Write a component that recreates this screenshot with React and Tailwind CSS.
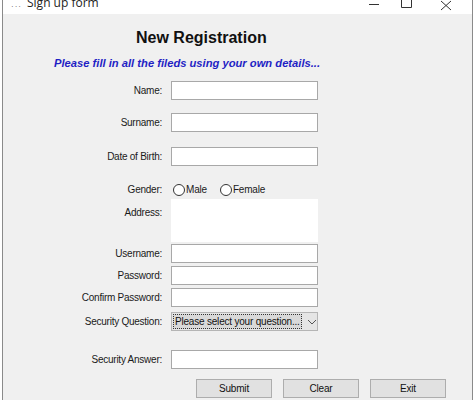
import { useState } from 'react';

const font = { fontFamily: '"Liberation Sans", Arial, sans-serif' };

const Field = ({ label, top, children, alignTop }) => (
  <div className={`flex ${alignTop ? 'items-start' : 'items-center'}`} style={{ marginTop: top }}>
    <div className={`w-[159px] text-right text-[10px] tracking-[-0.25px] text-[#1a1a1a] ${alignTop ? 'pt-[6px]' : ''}`}>{label}</div>
    <div className="ml-[9px]">{children}</div>
  </div>
);

const TextBox = () => (
  <input className="block w-[147px] h-[19px] bg-white border border-[#a8a8a8] outline-none px-1 text-[11px]" />
);

const Radio = ({ label, checked, onClick }) => (
  <button onClick={onClick} className="flex items-center gap-[1px] text-[10px] tracking-[-0.2px] text-[#1a1a1a]">
    <span className="w-[12px] h-[12px] rounded-full border border-[#333] bg-white flex items-center justify-center">
      {checked && <span className="w-[6px] h-[6px] rounded-full bg-[#333]" />}
    </span>
    {label}
  </button>
);

export default function App() {
  const [gender, setGender] = useState(null);

  return (
    <div className="w-[474px] h-[400px] overflow-hidden bg-white pl-[2px] pr-[1px]" style={font}>
      <div className="h-full border-l border-r border-[#8a8a8a] bg-[#f0f0f0] flex flex-col">
        {/* title bar */}
        <div className="h-[14px] bg-white flex items-start relative shrink-0">
          <span className="ml-[8px] mt-[3px] text-[8px] leading-none text-[#555] tracking-[1px]">···</span>
          <span className="ml-[5px] -mt-[3px] text-[12px] leading-none text-[#222]" style={{ fontFamily: '"Open Sans", "Liberation Sans", sans-serif' }}>
            Sign up form
          </span>
          <div className="ml-auto flex items-start">
            <svg width="46" height="14" viewBox="0 0 46 14" className="block">
              <line x1="21" y1="4.5" x2="31" y2="4.5" stroke="#333" strokeWidth="1" />
            </svg>
            <svg width="46" height="14" viewBox="0 0 46 14" className="-ml-[6px] block">
              <path d="M13.5 -2 V7.5 H23.5 V-2" fill="none" stroke="#333" strokeWidth="1" />
            </svg>
            <svg width="46" height="14" viewBox="0 0 46 14" className="-ml-[8px] block">
              <path d="M15 1 L25 10 M25 1 L15 10" fill="none" stroke="#333" strokeWidth="1" />
            </svg>
          </div>
        </div>

        {/* heading */}
        <div className="mt-[14px] pl-[133px] text-[16px] font-bold text-[#111] leading-[20px]">New Registration</div>
        <div className="mt-[8px] pl-[51px] text-[11.2px] font-bold italic text-[#1f1fc4] leading-[14px]">
          Please fill in all the fileds using your own details...
        </div>

        <div className="flex flex-col">
          <Field label="Name:" top={11}><TextBox /></Field>
          <Field label="Surname:" top={13}><TextBox /></Field>
          <Field label="Date of Birth:" top={15}><TextBox /></Field>
          <Field label="Gender:" top={16}>
            <div className="flex items-center h-[14px]">
              <span className="ml-[2px]"><Radio label="Male" checked={gender === 'm'} onClick={() => setGender('m')} /></span>
              <span className="ml-[13px]"><Radio label="Female" checked={gender === 'f'} onClick={() => setGender('f')} /></span>
            </div>
          </Field>
          <Field label="Address:" top={2} alignTop>
            <textarea className="block w-[147px] h-[43px] bg-white outline-none resize-none text-[11px] px-1" />
          </Field>
          <Field label="Username:" top={2}><TextBox /></Field>
          <Field label="Password:" top={3}><TextBox /></Field>
          <Field label="Confirm Password:" top={3}><TextBox /></Field>
          <Field label="Security Question:" top={5}>
            <div className="w-[147px] h-[19px] bg-[#e5e5e5] border border-[#b5b5b5] flex items-center">
              <div className="ml-[1px] h-[15px] w-[129px] border border-dotted border-[#333] bg-[#d9d9d9] flex items-center px-[1px] text-[10px] tracking-[-0.2px] text-[#111] whitespace-nowrap overflow-hidden">
                Please select your question...
              </div>
              <svg width="10" height="6" viewBox="0 0 10 6" className="ml-[5px]">
                <path d="M1 1 L5 5 L9 1" fill="none" stroke="#555" strokeWidth="1" />
              </svg>
            </div>
          </Field>
          <Field label="Security Answer:" top={19}><TextBox /></Field>

          <div className="flex mt-[10px] pl-[193px] gap-[11px]">
            {['Submit', 'Clear', 'Exit'].map((b) => (
              <button key={b} className="w-[76px] h-[19px] bg-[#e1e1e1] border border-[#adadad] text-[10px] tracking-[-0.2px] text-[#111] flex items-center justify-center">
                {b}
              </button>
            ))}
          </div>
        </div>
      </div>
    </div>
  );
}
